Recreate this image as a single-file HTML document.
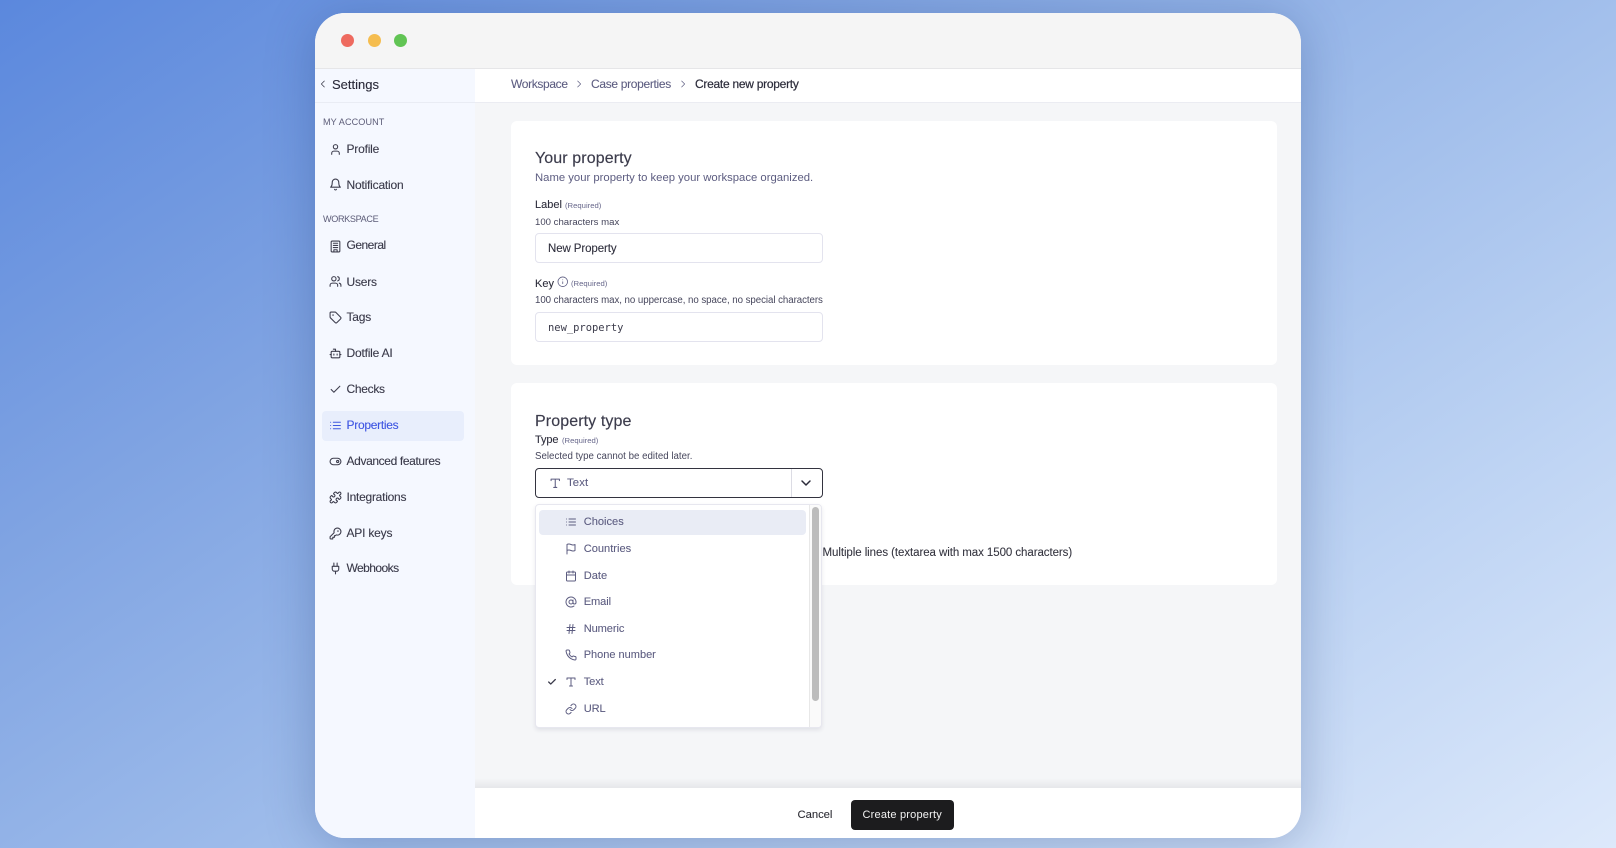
<!DOCTYPE html>
<html lang="en"><head><meta charset="utf-8"><title>Create new property</title>
<style>
html,body{margin:0;padding:0;width:1616px;height:848px;overflow:hidden}
body{background:linear-gradient(146deg,#5b88dd 0%,#7fa3e2 28%,#9dbbea 52%,#bdd3f3 76%,#dde9fb 100%);font-family:"Liberation Sans",sans-serif;position:relative}
#win{position:absolute;left:315px;top:13px;width:986px;height:825px;border-radius:30px;overflow:hidden;background:#f5f6f8}
#shadow{position:absolute;left:315px;top:13px;width:986px;height:825px;border-radius:30px;box-shadow:0 6px 50px rgba(20,50,110,.28)}
#page{position:absolute;left:0;top:0;width:1616px;height:848px;filter:blur(.25px)}
.b{position:absolute;box-sizing:border-box}
.t{position:absolute;white-space:nowrap;line-height:20px;height:20px;font-size:12px;color:#30303f}
.n{font-size:12px;letter-spacing:-.2px;color:#3a3a4a;-webkit-text-stroke:.12px currentColor}
.s{color:#5c5c80}
.h{font-size:16px;letter-spacing:.1px;color:#3c3c4c;-webkit-text-stroke:.15px currentColor}
.l{font-size:11px;color:#2e2e3c;-webkit-text-stroke:.1px currentColor}
.r{font-size:7.7px;color:#66668a}
.x{font-size:9.7px;color:#46465c}
.o{font-size:11.1px;color:#5c5c80;-webkit-text-stroke:.08px currentColor}
.c{font-size:9.1px;color:#5c5c78}
svg.i{position:absolute;fill:none;stroke:#3e3e4e;stroke-width:2;stroke-linecap:round;stroke-linejoin:round}
svg.g{stroke:#5c5c80}
.in{background:#fff;border:1px solid #e3e3ee;border-radius:4px}
</style></head><body>
<svg width="0" height="0" style="position:absolute">
<symbol id="user" viewBox="0 0 24 24"><path d="M19 21v-2a4 4 0 0 0-4-4H9a4 4 0 0 0-4 4v2"/><circle cx="12" cy="7" r="4"/></symbol>
<symbol id="bell" viewBox="0 0 24 24"><path d="M6 8a6 6 0 0 1 12 0c0 7 3 9 3 9H3s3-2 3-9"/><path d="M10.3 21a1.94 1.94 0 0 0 3.4 0"/></symbol>
<symbol id="build" viewBox="0 0 24 24"><rect x="4" y="2" width="16" height="20" rx="2"/><path d="M9 22v-4h6v4M8 6h8M8 10h8M8 14h8"/></symbol>
<symbol id="users" viewBox="0 0 24 24"><path d="M16 21v-2a4 4 0 0 0-4-4H6a4 4 0 0 0-4 4v2"/><circle cx="9" cy="7" r="4"/><path d="M22 21v-2a4 4 0 0 0-3-3.87M16 3.13a4 4 0 0 1 0 7.75"/></symbol>
<symbol id="tag" viewBox="0 0 24 24"><path d="M12.586 2.586A2 2 0 0 0 11.172 2H4a2 2 0 0 0-2 2v7.172a2 2 0 0 0 .586 1.414l8.704 8.704a2.426 2.426 0 0 0 3.42 0l6.58-6.58a2.426 2.426 0 0 0 0-3.42z"/><circle cx="7.5" cy="7.5" r=".5"/></symbol>
<symbol id="bot" viewBox="0 0 24 24"><path d="M12 8V4H8"/><rect x="4" y="8" width="16" height="12" rx="2"/><path d="M2 14h2M20 14h2M15 13v2M9 13v2"/></symbol>
<symbol id="check" viewBox="0 0 24 24"><path d="M20 6 9 17l-5-5"/></symbol>
<symbol id="list" viewBox="0 0 24 24"><path d="M3 6h.01M3 12h.01M3 18h.01M8 6h13M8 12h13M8 18h13"/></symbol>
<symbol id="toggle" viewBox="0 0 24 24"><rect x="2" y="6" width="20" height="12" rx="6"/><circle cx="16" cy="12" r="2"/></symbol>
<symbol id="puzzle" viewBox="0 0 24 24"><path d="M19.439 7.85c-.049.322.059.648.289.878l1.568 1.568c.47.47.706 1.087.706 1.704s-.235 1.233-.706 1.704l-1.611 1.611a.98.98 0 0 1-.837.276c-.47-.07-.802-.48-.968-.925a2.501 2.501 0 1 0-3.214 3.214c.446.166.855.497.925.968a.979.979 0 0 1-.276.837l-1.61 1.61a2.404 2.404 0 0 1-1.705.707 2.402 2.402 0 0 1-1.704-.706l-1.568-1.568a1.026 1.026 0 0 0-.877-.29c-.493.074-.84.504-1.02.968a2.5 2.5 0 1 1-3.237-3.237c.464-.18.894-.527.967-1.02a1.026 1.026 0 0 0-.289-.877l-1.568-1.568A2.402 2.402 0 0 1 1.998 12c0-.617.236-1.234.706-1.704L4.23 8.77c.24-.24.581-.353.917-.303.515.077.877.528 1.073 1.01a2.5 2.5 0 1 0 3.259-3.259c-.482-.196-.933-.558-1.01-1.073-.05-.336.062-.676.303-.917l1.525-1.525A2.402 2.402 0 0 1 12 1.998c.617 0 1.234.236 1.704.706l1.568 1.568c.23.23.556.338.877.29.493-.074.84-.504 1.02-.968a2.5 2.5 0 1 1 3.237 3.237c-.464.18-.894.527-.967 1.02Z"/></symbol>
<symbol id="key" viewBox="0 0 24 24"><path d="M2 18v3c0 .6.4 1 1 1h4v-3h3v-3h2l1.4-1.4a6.5 6.5 0 1 0-4-4Z"/><circle cx="16.5" cy="7.5" r=".5"/></symbol>
<symbol id="plug" viewBox="0 0 24 24"><path d="M12 22v-5M9 8V2M15 8V2M18 8v5a4 4 0 0 1-4 4h-4a4 4 0 0 1-4-4V8Z"/></symbol>
<symbol id="flag" viewBox="0 0 24 24"><path d="M4 15s1-1 4-1 5 2 8 2 4-1 4-1V3s-1 1-4 1-5-2-8-2-4 1-4 1zM4 22v-7"/></symbol>
<symbol id="cal" viewBox="0 0 24 24"><path d="M8 2v4M16 2v4"/><rect x="3" y="4" width="18" height="18" rx="2"/><path d="M3 10h18"/></symbol>
<symbol id="at" viewBox="0 0 24 24"><circle cx="12" cy="12" r="4"/><path d="M16 8v5a3 3 0 0 0 6 0v-1a10 10 0 1 0-4 8"/></symbol>
<symbol id="hash" viewBox="0 0 24 24"><path d="M4 9h16M4 15h16M10 3 8 21M16 3l-2 18"/></symbol>
<symbol id="phone" viewBox="0 0 24 24"><path d="M22 16.92v3a2 2 0 0 1-2.18 2 19.79 19.79 0 0 1-8.63-3.07 19.5 19.5 0 0 1-6-6 19.79 19.79 0 0 1-3.07-8.67A2 2 0 0 1 4.11 2h3a2 2 0 0 1 2 1.72 12.84 12.84 0 0 0 .7 2.81 2 2 0 0 1-.45 2.11L8.09 9.91a16 16 0 0 0 6 6l1.27-1.27a2 2 0 0 1 2.11-.45 12.84 12.84 0 0 0 2.81.7A2 2 0 0 1 22 16.92z"/></symbol>
<symbol id="link" viewBox="0 0 24 24"><path d="M10 13a5 5 0 0 0 7.54.54l3-3a5 5 0 0 0-7.07-7.07l-1.72 1.71M14 11a5 5 0 0 0-7.54-.54l-3 3a5 5 0 0 0 7.07 7.07l1.71-1.71"/></symbol>
<symbol id="type" viewBox="0 0 24 24"><path d="M4 7V4h16v3M9 20h6M12 4v16"/></symbol>
<symbol id="info" viewBox="0 0 24 24"><circle cx="12" cy="12" r="10"/><path d="M12 16v-4M12 8h.01"/></symbol>
</svg>
<div id="shadow"></div>
<div id="page">
<div id="win"></div>
<div id="ui" style="position:absolute;left:315px;top:13px;width:986px;height:825px;border-radius:30px;overflow:hidden">
<div style="position:absolute;left:-315px;top:-13px;width:1616px;height:848px">

<!-- title bar -->
<div class="b" style="left:315px;top:13px;width:986px;height:56px;background:#f5f5f5;border-bottom:1px solid #e6e6e8"></div>
<div class="b" style="left:341px;top:34px;width:13px;height:13px;border-radius:50%;background:#ee6a5f"></div>
<div class="b" style="left:368px;top:34px;width:13px;height:13px;border-radius:50%;background:#f5bd4f"></div>
<div class="b" style="left:394px;top:34px;width:13px;height:13px;border-radius:50%;background:#61c454"></div>

<!-- sidebar -->
<div class="b" style="left:315px;top:69px;width:160px;height:769px;background:#f5f8ff"></div>
<div class="b" style="left:315px;top:102px;width:160px;height:1px;background:#e9ecf4"></div>
<svg class="i" style="left:319px;top:80px;stroke-width:2.4" width="8" height="8" viewBox="0 0 24 24"><path d="M16 3 7 12l9 9"/></svg>
<span class="t n" style="left:332px;top:75px;font-size:13px;letter-spacing:0;color:#2b2b3a">Settings</span>
<span class="t c" style="left:323px;top:111.5px;letter-spacing:.1px">MY ACCOUNT</span>
<span class="t c" style="left:323px;top:208.5px;letter-spacing:-.35px">WORKSPACE</span>

<svg class="i" style="left:328.5px;top:142.5px" width="13" height="13"><use href="#user"/></svg>
<span class="t n" style="left:346.5px;top:139px">Profile</span>
<svg class="i" style="left:328.5px;top:178px" width="13" height="13"><use href="#bell"/></svg>
<span class="t n" style="left:346.5px;top:174.5px">Notification</span>
<svg class="i" style="left:328.5px;top:239.5px" width="13" height="13"><use href="#build"/></svg>
<span class="t n" style="left:346.5px;top:235px;letter-spacing:-.5px">General</span>
<svg class="i" style="left:328.5px;top:275px" width="13" height="13"><use href="#users"/></svg>
<span class="t n" style="left:346.5px;top:271.5px">Users</span>
<svg class="i" style="left:328.5px;top:311px" width="13" height="13"><use href="#tag"/></svg>
<span class="t n" style="left:346.5px;top:307px">Tags</span>
<svg class="i" style="left:328.5px;top:347px" width="13" height="13"><use href="#bot"/></svg>
<span class="t n" style="left:346.5px;top:343px">Dotfile AI</span>
<svg class="i" style="left:328.5px;top:382.5px" width="13" height="13"><use href="#check"/></svg>
<span class="t n" style="left:346.5px;top:379px;letter-spacing:-.3px">Checks</span>
<div class="b" style="left:322px;top:411px;width:142px;height:30px;background:#e8eefc;border-radius:4px"></div>
<svg class="i" style="left:328.5px;top:418.5px;stroke:#3f5ae0" width="13" height="13"><use href="#list"/></svg>
<span class="t n" style="left:346.5px;top:414.5px;color:#3f56e2;letter-spacing:-.28px">Properties</span>
<svg class="i" style="left:328.5px;top:455px" width="13" height="13"><use href="#toggle"/></svg>
<span class="t n" style="left:346.5px;top:451px;letter-spacing:-.37px">Advanced features</span>
<svg class="i" style="left:328.5px;top:491px" width="13" height="13"><use href="#puzzle"/></svg>
<span class="t n" style="left:346.5px;top:487px;letter-spacing:-.25px">Integrations</span>
<svg class="i" style="left:328.5px;top:526.5px" width="13" height="13"><use href="#key"/></svg>
<span class="t n" style="left:346.5px;top:522.5px">API keys</span>
<svg class="i" style="left:328.5px;top:562px" width="13" height="13"><use href="#plug"/></svg>
<span class="t n" style="left:346.5px;top:558px;letter-spacing:-.55px">Webhooks</span>

<!-- breadcrumb -->
<div class="b" style="left:475px;top:69px;width:826px;height:34px;background:#fff;border-bottom:1px solid #ebecf2"></div>
<span class="t s" style="left:511px;top:74px;letter-spacing:-.35px;-webkit-text-stroke:.08px #5c5c80">Workspace</span>
<svg class="i g" style="left:575px;top:80px" width="8" height="8" viewBox="0 0 24 24"><path d="m8 3 9 9-9 9"/></svg>
<span class="t s" style="left:591px;top:74px;letter-spacing:-.32px;-webkit-text-stroke:.08px #5c5c80">Case properties</span>
<svg class="i g" style="left:679px;top:80px" width="8" height="8" viewBox="0 0 24 24"><path d="m8 3 9 9-9 9"/></svg>
<span class="t" style="left:695px;top:74px;letter-spacing:-.27px;color:#2b2b3a;-webkit-text-stroke:.2px #2b2b3a">Create new property</span>

<!-- card 1 -->
<div class="b" style="left:511px;top:121px;width:766px;height:244px;background:#fff;border-radius:6px"></div>
<span class="t h" style="left:535px;top:148.5px">Your property</span>
<span class="t s" style="left:535px;top:168px;font-size:11.3px">Name your property to keep your workspace organized.</span>
<span class="t l" style="left:535px;top:194.5px">Label</span>
<span class="t r" style="left:565px;top:195.5px">(Required)</span>
<span class="t x" style="left:535px;top:212.5px;font-size:9.6px">100 characters max</span>
<div class="b in" style="left:535px;top:233px;width:287.5px;height:30px"></div>
<span class="t l" style="left:548px;top:238.7px;font-size:11.5px;letter-spacing:-.1px">New Property</span>
<span class="t l" style="left:535px;top:273.5px">Key</span>
<svg class="i g" style="left:557px;top:276px;stroke-width:1.7" width="11.5" height="11.5"><use href="#info"/></svg>
<span class="t r" style="left:571px;top:274px">(Required)</span>
<span class="t x" style="left:535px;top:290.8px;letter-spacing:-.045px">100 characters max, no uppercase, no space, no special characters</span>
<div class="b in" style="left:535px;top:312px;width:287.5px;height:30px"></div>
<span class="t" style="left:548px;top:317.5px;font:10.45px/20px 'DejaVu Sans Mono','Liberation Mono',monospace;color:#3a3a4a">new_property</span>

<!-- card 2 -->
<div class="b" style="left:511px;top:383px;width:766px;height:202px;background:#fff;border-radius:6px"></div>
<span class="t h" style="left:535px;top:411.5px">Property type</span>
<span class="t l" style="left:535px;top:430px;letter-spacing:-.1px">Type</span>
<span class="t r" style="left:562px;top:430.5px">(Required)</span>
<span class="t x" style="left:535px;top:447px;letter-spacing:.02px">Selected type cannot be edited later.</span>
<div class="b" style="left:535px;top:468px;width:287.5px;height:30px;background:#fff;border:1px solid #33333f;border-radius:4px"></div>
<div class="b" style="left:791px;top:469px;width:1px;height:28px;background:#dcdce4"></div>
<svg class="i g" style="left:548.5px;top:477px" width="12.5" height="12.5"><use href="#type"/></svg>
<span class="t o" style="left:567px;top:472.7px;font-size:11.3px;letter-spacing:.15px">Text</span>
<svg class="i" style="left:800px;top:477px;stroke:#2b2b3a;stroke-width:3" width="12" height="12" viewBox="0 0 24 24"><path d="m4 8 8 8 8-8"/></svg>
<span class="t" style="left:822.5px;top:542.5px;font-size:11.5px;letter-spacing:-.07px;color:#34343f;-webkit-text-stroke:.08px #34343f">Multiple lines (textarea with max 1500 characters)</span>

<!-- dropdown -->
<div class="b" style="left:535px;top:504px;width:287px;height:224px;background:#fff;border:1px solid #e7e7ef;border-radius:4px;box-shadow:0 2px 4px rgba(40,40,80,.1)"></div>
<div class="b" style="left:809px;top:505px;width:12px;height:222px;background:#fafafa;border-left:1px solid #e8e8e8;border-radius:0 3px 3px 0"></div>
<div class="b" style="left:812px;top:507px;width:7px;height:194px;background:#bcbcbc;border-radius:4px"></div>
<div class="b" style="left:539px;top:510px;width:267px;height:24.5px;background:#e9ecf5;border-radius:4px"></div>

<svg class="i g" style="left:565px;top:516px" width="12" height="12"><use href="#list"/></svg>
<span class="t o" style="left:583.7px;top:511.8px">Choices</span>
<svg class="i g" style="left:565px;top:543px" width="12" height="12"><use href="#flag"/></svg>
<span class="t o" style="left:583.7px;top:539.2px">Countries</span>
<svg class="i g" style="left:565px;top:569.5px" width="12" height="12"><use href="#cal"/></svg>
<span class="t o" style="left:583.7px;top:565.7px">Date</span>
<svg class="i g" style="left:565px;top:596px" width="12" height="12"><use href="#at"/></svg>
<span class="t o" style="left:583.7px;top:591.7px;letter-spacing:-.1px">Email</span>
<svg class="i g" style="left:565px;top:622.5px" width="12" height="12"><use href="#hash"/></svg>
<span class="t o" style="left:583.7px;top:618.8px;letter-spacing:-.1px">Numeric</span>
<svg class="i g" style="left:565px;top:649px" width="12" height="12"><use href="#phone"/></svg>
<span class="t o" style="left:583.7px;top:644.7px;font-size:11px">Phone number</span>
<svg class="i" style="left:547px;top:677px;stroke:#3a3a4a;stroke-width:3" width="10" height="10"><use href="#check"/></svg>
<svg class="i g" style="left:565px;top:676px" width="12" height="12"><use href="#type"/></svg>
<span class="t o" style="left:583.7px;top:671.8px;letter-spacing:-.1px">Text</span>
<svg class="i g" style="left:565px;top:703px" width="12" height="12"><use href="#link"/></svg>
<span class="t o" style="left:583.7px;top:699.2px;letter-spacing:-.1px">URL</span>

<!-- footer -->
<div class="b" style="left:475px;top:778px;width:826px;height:10px;background:linear-gradient(rgba(30,30,50,0),rgba(30,30,50,.07))"></div>
<div class="b" style="left:475px;top:788px;width:826px;height:50px;background:#fff"></div>
<span class="t" style="left:797.5px;top:804.7px;font-size:11.3px;letter-spacing:-.05px;color:#2b2b33;-webkit-text-stroke:.08px #2b2b33">Cancel</span>
<div class="b" style="left:851px;top:800px;width:103px;height:30px;background:#1c1c1e;border-radius:4px"></div>
<span class="t" style="left:862.5px;top:804.7px;font-size:11px;letter-spacing:.2px;color:#f2f2f2">Create property</span>
</div></div>
</div>
</body></html>
